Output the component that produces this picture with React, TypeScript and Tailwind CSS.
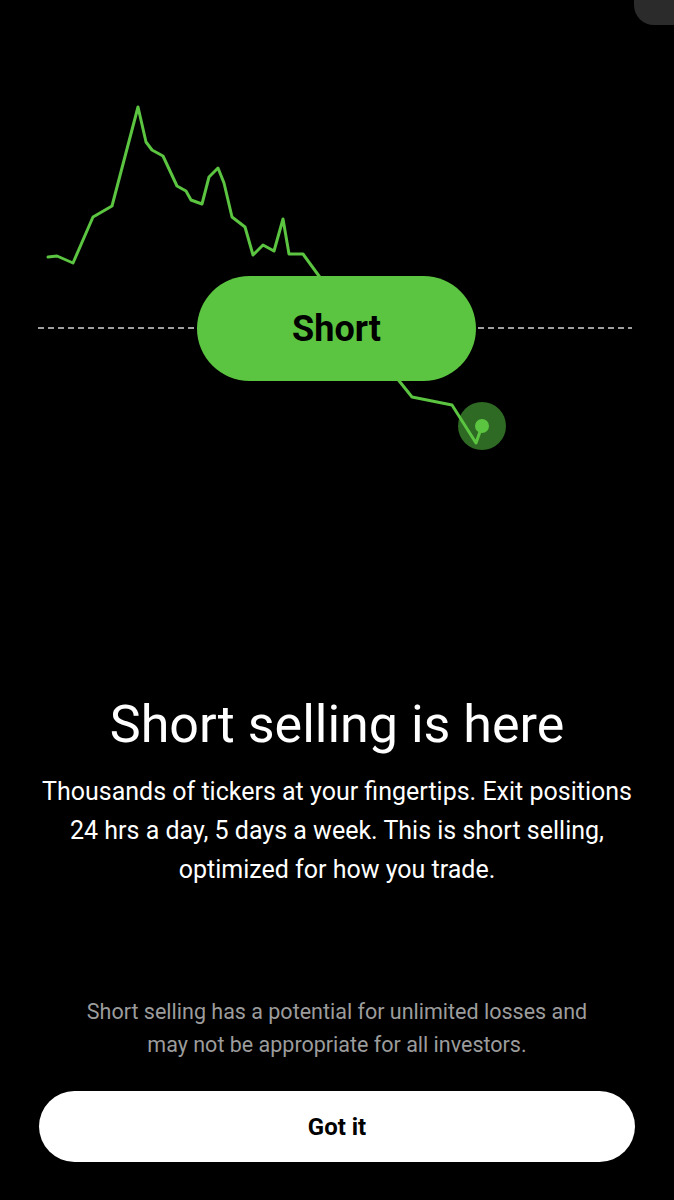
import React from 'react';

// price path, traced from the chart — last two points are the pin
const PATH: [number, number][] = [
  [48, 257], [57, 256], [73, 263], [93, 217], [112, 206], [138, 107], [146, 142],
  [152, 150], [163, 156], [177, 186], [186, 191], [191, 200], [202, 204], [209, 177],
  [218, 168], [224, 183], [232, 217], [245, 227], [253, 255], [263, 245], [274, 251],
  [283, 219], [289, 254], [303, 254], [319, 276], [400, 382], [412, 397], [452, 405],
  [476, 443], [482, 426],
];

const ShortChart: React.FC = () => {
  const pts = PATH.map(([x, y]) => `${x},${y}`).join(' ');
  return (
    <div className="relative h-[480px] w-full">
      <svg width="674" height="480" viewBox="0 0 674 480" className="block">
        <line x1="38" y1="328" x2="632" y2="328" stroke="#d4d4d4" strokeWidth="1.5" strokeDasharray="6 4" />
        <circle cx="482" cy="426" r="24" fill="#2f6a24" />
        <polyline points={pts} fill="none" stroke="#5bc440" strokeWidth="3" strokeLinejoin="round" strokeLinecap="round" />
        <circle cx="482" cy="426" r="7" fill="#5bc440" />
      </svg>
      <div className="absolute left-[197px] top-[276px] flex h-[105px] w-[279px] items-center justify-center rounded-full bg-[#5bc440]">
        <span className="text-[36px] font-bold text-black">Short</span>
      </div>
    </div>
  );
};

const App: React.FC = () => {
  return (
    <div
      className="relative flex h-[1200px] w-full flex-col overflow-hidden bg-black"
      style={{ fontFamily: 'Roboto, "Liberation Sans", sans-serif' }}
    >
      {/* close button peeking in at the corner */}
      <div className="absolute right-[-20px] top-[-30px] h-[55px] w-[60px] rounded-[20px] bg-[#2b2b2b]" />

      <ShortChart />

      <div className="mt-[215px] flex flex-col items-center px-4 text-center">
        <h1 className="text-[52px] font-normal leading-[60px] text-white">Short selling is here</h1>
        <p className="mt-[17px] text-[25px] leading-[39px] text-white">
          Thousands of tickers at your fingertips. Exit positions
          <br />
          24 hrs a day, 5 days a week. This is short selling,
          <br />
          optimized for how you trade.
        </p>
      </div>

      <div className="mt-auto flex flex-col items-center px-[39px] pb-[38px]">
        <p className="text-center text-[21.5px] leading-[33px] text-[#9c9c9c]">
          Short selling has a potential for unlimited losses and
          <br />
          may not be appropriate for all investors.
        </p>
        <button className="mt-[30px] flex h-[71px] w-full items-center justify-center rounded-full bg-white text-[24px] font-bold text-black">
          Got it
        </button>
      </div>
    </div>
  );
};

export default App;
